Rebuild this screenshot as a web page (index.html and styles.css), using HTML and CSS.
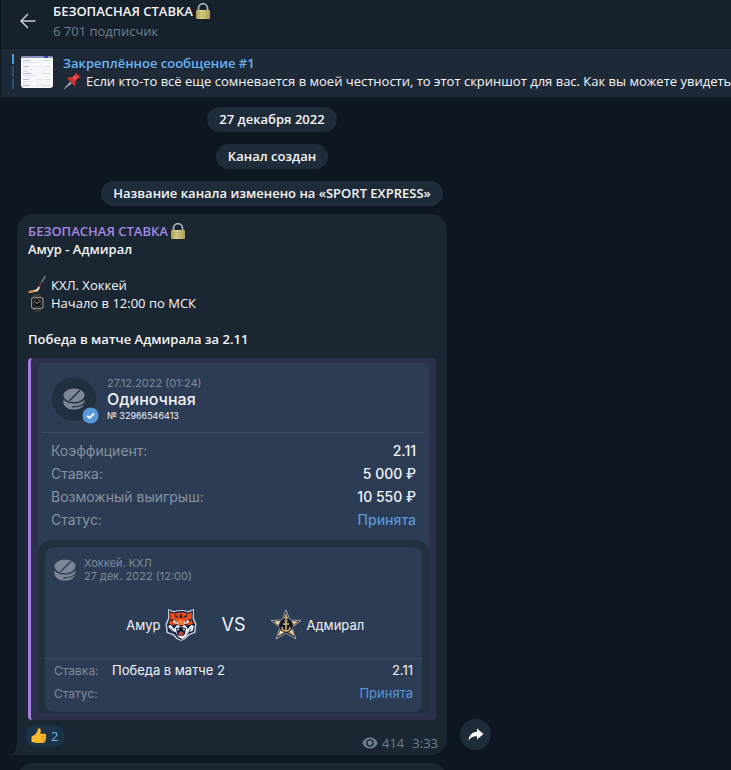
FILE: index.html
```html
<!DOCTYPE html>
<html lang="ru">
<head>
<meta charset="utf-8">
<title>БЕЗОПАСНАЯ СТАВКА</title>
<meta name="viewport" content="width=device-width, initial-scale=1">
<link rel="stylesheet" href="styles.css">
</head>
<body>
<svg class="defs" width="0" height="0" aria-hidden="true">
  <defs>
    <linearGradient id="gold" x1="0" x2="1" y1="0" y2="0">
      <stop offset="0" stop-color="#a89d52"/><stop offset=".4" stop-color="#ded28a"/><stop offset="1" stop-color="#ab9f55"/>
    </linearGradient>
    <symbol id="lock" viewBox="0 0 16 18">
      <path d="M3.500 9V6.200a4.500 4.500 0 0 1 9 0V9" fill="none" stroke="#a9b2b8" stroke-width="1.800"/>
      <rect x="1" y="8" width="14" height="9" rx="1" fill="url(#gold)"/>
      <path d="M1.500 10.500h13M1.500 12.700h13M1.500 14.900h13" stroke="#a59a55" stroke-width=".4"/>
    </symbol>
    <symbol id="puck" viewBox="0 0 24 24">
      <ellipse cx="12" cy="8" rx="11.500" ry="7.500" fill="currentColor"/>
      <path d="M7 14 18.500 2.500" stroke="var(--puck-cut)" stroke-width="1.500"/>
      <path d="M.5 12.500c2 3 6.500 4.500 11.500 4.500s9.500-1.500 11.500-4.500v4c-1 4.500-6 7-11.500 7S1.500 21 .5 16.500Z" fill="currentColor"/>
      <path d="M10 20.500c5.500.3 11-1.200 13.500-4.500" fill="none" stroke="var(--puck-cut)" stroke-width="1.300"/>
    </symbol>
  </defs>
</svg>
<div class="app">
  <header class="topbar">
    <button class="back" type="button" aria-label="Назад">
      <svg viewBox="0 0 16 16" width="16" height="16"><path d="M15.500 8H1M8 1 1 8l7 7" fill="none" stroke="currentColor" stroke-width="1.500"/></svg>
    </button>
    <div class="channel">
      <h1 class="channel-name">БЕЗОПАСНАЯ СТАВКА<svg class="lock"><use href="#lock"/></svg></h1>
      <p class="subscribers">6 701 подписчик</p>
    </div>
  </header>

  <a class="pinned" href="#message">
    <span class="pin-steps"><i class="step active"></i><i class="step"></i><i class="step"></i></span>
    <svg class="thumb" viewBox="0 0 32 32" aria-hidden="true">
      <rect width="32" height="32" rx="3" fill="#f6f7fa"/>
      <path d="M0 2a2 2 0 0 1 2-2h28a2 2 0 0 1 2 2H0Z" fill="#8a90b8"/><path d="M23 0h4v2h-4z" fill="#3541a8"/>
      <g stroke="#a7a9c0" stroke-width=".8"><path d="M2 4.500h7M2 10.500h6M2 17.500h8M2 23.500h6M2 29.500h7"/></g>
      <g stroke="#dcdde6" stroke-width=".8"><path d="M2 6.500h14M2 13.500h9M2 15.500h5M2 19.500h13M2 25.500h10M2 27.500h5M15 10.500h5M15 23.500h6M15 29.500h4"/></g>
      <g stroke="#c5dfb4" stroke-width=".8"><path d="M22 4.500h7M24 10.500h5M21 17.500h8M24 23.500h5M21 29.500h8"/></g>
    </svg>
    <span class="pin-body">
      <strong class="pin-title">Закреплённое сообщение #1</strong>
      <span class="pin-text"><svg class="pushpin" viewBox="0 0 18 18"><path d="m1 17 6-7 1.500 1.500Z" fill="#9aa6b0" stroke="#9aa6b0" stroke-width=".6"/><path d="M4 6c2-1.500 4-1 5-.5l3-2.500c-.3-1 0-2 .8-2.500l5 4.700c-.8 1-1.800 1.300-2.800 1L12.500 9c.5 2 .3 3.500-1 5Z" fill="#d02f32"/><path d="m9 5.500 3-2.500 2.700 2.500-2.700 3Z" fill="#e9504c"/></svg>Если кто-то всё еще сомневается в моей честности, то этот скриншот для вас. Как вы можете увидеть вс</span>
    </span>
  </a>

  <main class="chat">
    <div class="services">
      <p class="service">27 декабря 2022</p>
      <p class="service">Канал создан</p>
      <p class="service">Название канала изменено на «SPORT EXPRESS»</p>
    </div>

    <div class="message-row">
      <article class="bubble" id="message">
        <svg class="tail" viewBox="0 0 8 16" aria-hidden="true"><path d="M8 0v16H0c4-2 6-6 6-16Z" fill="#1a2733"/></svg>
        <h2 class="author">БЕЗОПАСНАЯ СТАВКА<svg class="lock"><use href="#lock"/></svg></h2>
        <p class="line bold">Амур - Адмирал</p>
        <p class="line gap"><svg class="emoji" viewBox="0 0 18 18"><path d="M17 .5 9.500 13" stroke="#a03a38" stroke-width="1.300"/><path d="m17.300 0-3.500 6" stroke="#7b868e" stroke-width="1.300"/><path d="m10.500 10.500-2.200 3-7 1.500c-1.200.5-1 2 .2 2l7.200-1.400c1.200-.3 1.700-1 2.300-2.200l1-2Z" fill="#e9d5bd"/><path d="m6 14-4.700 1c-1.200.5-1 2 .2 2l5-1Z" fill="#d7852c"/></svg>КХЛ. Хоккей</p>
        <p class="line"><svg class="emoji" viewBox="0 0 18 18"><path d="M4 4 6 0h6l2 4ZM4 14l2 3.500h6l2-3.500Z" fill="#3c3c3d"/><rect x="3" y="3" width="12.500" height="12" rx="2.500" fill="#8d8c8a"/><rect x="4.200" y="4.200" width="10" height="9.600" rx="1.500" fill="#0c0c0c"/><circle cx="9.200" cy="9" r="3.800" fill="none" stroke="#555" stroke-width=".8"/><path d="m6.700 7.500 2.500 2 3-2.500" fill="none" stroke="#ccc" stroke-width=".8"/></svg>Начало в 12:00 по МСК</p>
        <p class="line bold gap">Победа в матче Адмирала за 2.11</p>

        <section class="quote">
          <div class="ticket">
            <div class="ticket-head">
              <div class="sport">
                <svg class="sport-puck"><use href="#puck"/></svg>
                <svg class="check" viewBox="0 0 18 18"><circle cx="9" cy="9" r="8.500" fill="#5698d8"/><path d="m5.500 9.200 2.500 2.500 4.800-5" fill="none" stroke="#fff" stroke-width="1.900"/></svg>
              </div>
              <div>
                <p class="date">27.12.2022 (01:24)</p>
                <h3 class="kind">Одиночная</h3>
                <p class="number">№ 32966546413</p>
              </div>
            </div>
            <dl class="facts">
              <div class="fact"><dt>Коэффициент:</dt><dd>2.11</dd></div>
              <div class="fact"><dt>Ставка:</dt><dd>5 000 ₽</dd></div>
              <div class="fact"><dt>Возможный выигрыш:</dt><dd>10 550 ₽</dd></div>
              <div class="fact"><dt>Статус:</dt><dd class="accepted">Принята</dd></div>
            </dl>
            <div class="event-wrap">
              <div class="event">
                <div class="event-head">
                  <svg class="event-puck"><use href="#puck"/></svg>
                  <p>Хоккей. КХЛ<br>27 дек. 2022 (12:00)</p>
                </div>
                <div class="match">
                  <div class="team home"><span>Амур</span>
                    <svg class="crest" viewBox="0 0 32 32"><path d="m3 0 6 2c4-1.500 10-1.500 14 0l6-2v9l2.500 6-1 9-6 2-4 4-4.500 2-4.500-2-4-4-6-2-1-9L3 9Z" fill="#c3c9d4"/><path d="m4 1.500 5 2c4-2 10-2 14 0l5-2-.5 8 2.500 6-1 7.500-6 2-3.500 4-3.500 2-3.500-2-3.500-4-6-2-1-7.500 2.500-6Z" fill="#172342"/><path d="m5 3 4 2c4-2 10-2 14 0l4-2-.5 7 1.500 5-4 1-4-1-4 3-4-3-4 1-4-1 1.500-5Z" fill="#eb4d17"/><path d="m16 4-1.500 4L16 10l1.500-2ZM10 5l4 4-4-1Zm12 0-4 4 4-1ZM5 10l6 1-5 1.500Zm22 0-6 1 5 1.500Z" fill="#172342"/><path d="m8 11 6 2-1 2-4-1Zm16 0-6 2 1 2 4-1Z" fill="#fff"/><path d="m10 12 3 1-2 .8Zm12 0-3 1 2 .8Z" fill="#172342"/><path d="m14 11 2-1 2 1 1.500 5-3.500 3-3.500-3Z" fill="#f47a3a"/><path d="m3 17 3-1 3 4 3-4 4 2 4-2 3 4 3-4 3 1-1.500 5-4 1-3 5-3.500 2-3.500-2-3-5-4-1Z" fill="#f1f2f4"/><path d="m5 18 4 5-2-1Zm22 0-4 5 2-1Z" fill="#1b2948"/><path d="m11 19 5-1 5 1-1 6-2 2h-4l-2-2Z" fill="#101a35"/><path d="m13 24 3-2 3 2-2 3h-2Z" fill="#b8473f"/><path d="m12 19.500 1 3 1-3m4 0 1 3 1-3" fill="#fff"/><path d="M14 16h4l-2 2Z" fill="#121b34"/></svg>
                  </div>
                  <strong class="versus">VS</strong>
                  <div class="team away">
                    <svg class="crest" viewBox="0 0 32 32"><path d="m16 1 4 10 11 .5-9 7L26 30l-10-6L6 30l4-11.500-9-7L12 11Z" fill="#172033" stroke="#bfc2c5" stroke-width=".8"/><path d="m16 4 3 8 9 .8-7 5.400L24 27l-8-5-8 5 3-8.800-7-5.400 9-.8Z" fill="#d5a253"/><path d="m16 4 1 7-1 5Zm12 8.800-8 2.500-4 1 3-4Zm-4 14.200-5-6-3-5 5 2.200ZM8 27l4-7 4-4v6Zm-4-14.200 9-.8 3 4-5 1Z" fill="#f5e5bd"/><circle cx="16" cy="16.500" r="7" fill="#10192b"/><path d="M16 12v10m-3-7h6m-7 3c0 3 2 4 4 4s4-1 4-4" fill="none" stroke="#d8b176" stroke-width="1.500"/><circle cx="16" cy="11.800" r="1.200" fill="none" stroke="#e7c68d"/></svg>
                    <span>Адмирал</span>
                  </div>
                </div>
                <dl class="outcome">
                  <div class="result"><dt>Ставка:</dt><dd class="pick">Победа в матче 2</dd><dd>2.11</dd></div>
                  <div class="result"><dt>Статус:</dt><dd class="accepted">Принята</dd></div>
                </dl>
              </div>
            </div>
          </div>
        </section>

        <footer class="meta">
          <button class="reaction" type="button" aria-label="Нравится, 2">
            <svg viewBox="0 0 16 16" width="16" height="16"><path d="M.5 8.500C2 7.500 4 7 5 5.500 6 4 6.500 3 7 1c.3-1 2-1 2.600.3.6 1.500 0 3.200-.4 4.500h4.300c1.800 0 2 1.700 1.200 2.400.9.700.8 2-.1 2.500.5.800.2 1.900-.7 2.300.2 1.200-.5 2-1.700 2H6c-2 0-3.500-.6-5.500-1.200Z" fill="#fdb92e"/><path d="M10.500 8.500h4M10.500 11h4M10 13.200h3.500" stroke="#d98b1d" stroke-width=".7"/></svg>
            <span>2</span>
          </button>
          <div class="stats">
            <svg viewBox="0 0 16 12" width="16" height="12"><path d="M8 .5C4.500.500 1.500 2.500.3 6c1.200 3.500 4.200 5.500 7.700 5.500s6.500-2 7.700-5.500C14.500 2.500 11.500.5 8 .5Z" fill="currentColor"/><circle cx="8" cy="6" r="3.100" fill="none" stroke="#1a2733" stroke-width="1.400"/></svg>
            <span>414</span><time>3:33</time>
          </div>
        </footer>
      </article>
      <button class="share" type="button" aria-label="Поделиться">
        <svg viewBox="0 0 16 14" width="16" height="14"><path d="M9 .5 15.500 6 9 11.500V8.300C5.500 8 3 9 .6 12.500.8 7.500 4 4 9 3.700Z" fill="#fff"/></svg>
      </button>
    </div>
    <div class="bubble next"></div>
  </main>
</div>
</body>
</html>
```

FILE: styles.css
```css
* { box-sizing: border-box; }
body, h1, h2, h3, p, dl, dd { margin: 0; }
body {
  background: #0e1621;
  color: #f5f5f5;
  font: 13px/18px "Open Sans", "Noto Sans", sans-serif;
}
button { border: 0; padding: 0; font: inherit; color: inherit; cursor: pointer; }
svg { flex: none; }
.defs { position: absolute; }

.app {
  display: flex;
  flex-direction: column;
  height: 100vh;
  overflow: hidden;
  border-left: 1px solid #101921;
}

.topbar {
  display: flex;
  flex: none;
  gap: 9px;
  height: 49px;
  padding-left: 10px;
  background: #17212b;
  border-bottom: 1px solid #111b24;
}
.back {
  display: flex;
  align-items: center;
  justify-content: center;
  width: 33px;
  height: 42px;
  background: none;
  color: #c9cdd1;
}
.channel { padding-top: 2px; }
.channel-name, .author { display: flex; align-items: center; gap: 2px; font-size: 13px; font-weight: 600; line-height: 18px; }
.lock { width: 16px; height: 18px; }
.subscribers { padding-top: 2px; color: #6d7f8f; }

.pinned {
  display: flex;
  flex: none;
  height: 48px;
  padding: 5px 0 5px 11px;
  background: #1e2938;
  color: inherit;
  text-decoration: none;
}
.pin-steps { display: flex; flex-direction: column; gap: 2px; width: 2px; height: 35px; margin-right: 7px; }
.step { flex: 1; background: #29506c; }
.step.active { background: #4b9bdc; }
.thumb { width: 32px; height: 32px; margin: 2px 10px 0 0; }
.pin-body { display: flex; flex-direction: column; min-width: 0; }
.pin-title { color: #6ab3f3; font-weight: 600; }
.pin-text { display: flex; align-items: center; gap: 5px; overflow: hidden; white-space: nowrap; }
.pushpin { width: 18px; height: 18px; }

.chat { flex: 1; min-height: 0; padding: 10px 16px 0; overflow: hidden; }
.services {
  display: flex;
  flex-direction: column;
  align-items: center;
  gap: 12px;
  max-width: 510px;
  margin-bottom: 8px;
}
.service {
  padding: 3px 12px 4px;
  border-radius: 13px;
  background: #1e2c3a;
  font-weight: 600;
}

.message-row { display: flex; align-items: flex-end; gap: 13px; }
.bubble {
  position: relative;
  width: 100%;
  max-width: 430px;
  padding: 8px 11px 6px;
  border-radius: 16px 16px 16px 0;
  background: #1a2733;
}
.tail { position: absolute; bottom: 0; left: -6px; width: 8px; height: 16px; }
.author { color: #a487e2; }
.line { display: flex; align-items: center; gap: 5px; }
.bold { font-weight: 600; }
.gap { margin-top: 18px; }
.emoji { width: 18px; height: 18px; }

.quote {
  margin-top: 10px;
  padding: 5px 7px 7px;
  border-left: 3px solid #a37ddc;
  border-radius: 4px;
  background: #2d304a;
  font-family: Inter, sans-serif;
}
.ticket { border-radius: 4px; background: #2c3c54; color: #f0f3f7; }
.ticket-head {
  display: flex;
  gap: 11px;
  margin: 0 4px;
  padding: 13px 0 10px 10px;
  border-bottom: 1px solid #3c4c62;
}
.sport {
  position: relative;
  display: flex;
  align-items: center;
  justify-content: center;
  width: 44px;
  height: 44px;
  margin-top: 1px;
  border-radius: 50%;
  background: #20303e;
  color: #7c8694;
  --puck-cut: #20303e;
}
.sport-puck { width: 22px; height: 22px; }
.check { position: absolute; right: -3px; bottom: -3px; width: 17px; height: 17px; }
.date { color: #7d8a9b; font-size: 11px; line-height: 14px; }
.kind { font-size: 16px; font-weight: 500; line-height: 18px; }
.number { padding-top: 2px; font-size: 9px; line-height: 12px; }
.facts { padding: 6px 13px 9px; font-size: 14px; line-height: 23px; }
.fact { display: flex; justify-content: space-between; }
.fact dt { color: #8691a0; }
.fact dd { font-weight: 500; }
.facts .accepted, .outcome .accepted { color: #5797d6; }

.event-wrap { padding: 7px 7px 1px; border-radius: 14px 14px 0 0; background: #20303e; }
.event { border-radius: 9px; background: #2c3c54; }
.event-head {
  display: flex;
  gap: 8px;
  padding: 10px 9px 0;
  color: #7f8b9b;
  font-size: 11px;
  line-height: 13px;
  --puck-cut: #2c3c54;
}
.event-puck { width: 22px; height: 22px; margin-top: 2px; color: #7c8694; }
.match {
  display: grid;
  grid-template-columns: 1fr auto 1fr;
  align-items: center;
  gap: 25px;
  padding: 25px 0 16px;
  font-size: 13px;
}
.team { display: flex; align-items: center; gap: 4px; }
.home { justify-content: flex-end; }
.crest { width: 32px; height: 34px; }
.versus { font-size: 18px; font-weight: 400; }
.outcome { padding-bottom: 7px; border-top: 1px solid #3c4c62; font-size: 13px; line-height: 23px; }
.result { display: flex; padding: 0 9px; }
.result dt { width: 58px; color: #7f8b9b; font-size: 12px; }
.result dd { margin-left: auto; }
.result .pick { margin-left: 0; }

.meta { display: flex; align-items: flex-end; justify-content: space-between; margin: 5px -2px 0 -3px; }
.reaction {
  display: flex;
  align-items: center;
  gap: 4px;
  height: 22px;
  margin-bottom: 2px;
  padding: 0 7px 0 6px;
  border-radius: 11px;
  background: #1c3347;
  color: #6ab3f3;
}
.stats { display: flex; align-items: center; gap: 4px; height: 18px; margin-bottom: -3px; color: #6d7f8f; }
.stats time { margin-left: 4px; }
.share {
  display: flex;
  flex: none;
  align-items: center;
  justify-content: center;
  width: 31px;
  height: 31px;
  margin-bottom: 5px;
  border-radius: 50%;
  background: #1e2c3a;
}
.next { height: 60px; margin-top: 8px; }
```
